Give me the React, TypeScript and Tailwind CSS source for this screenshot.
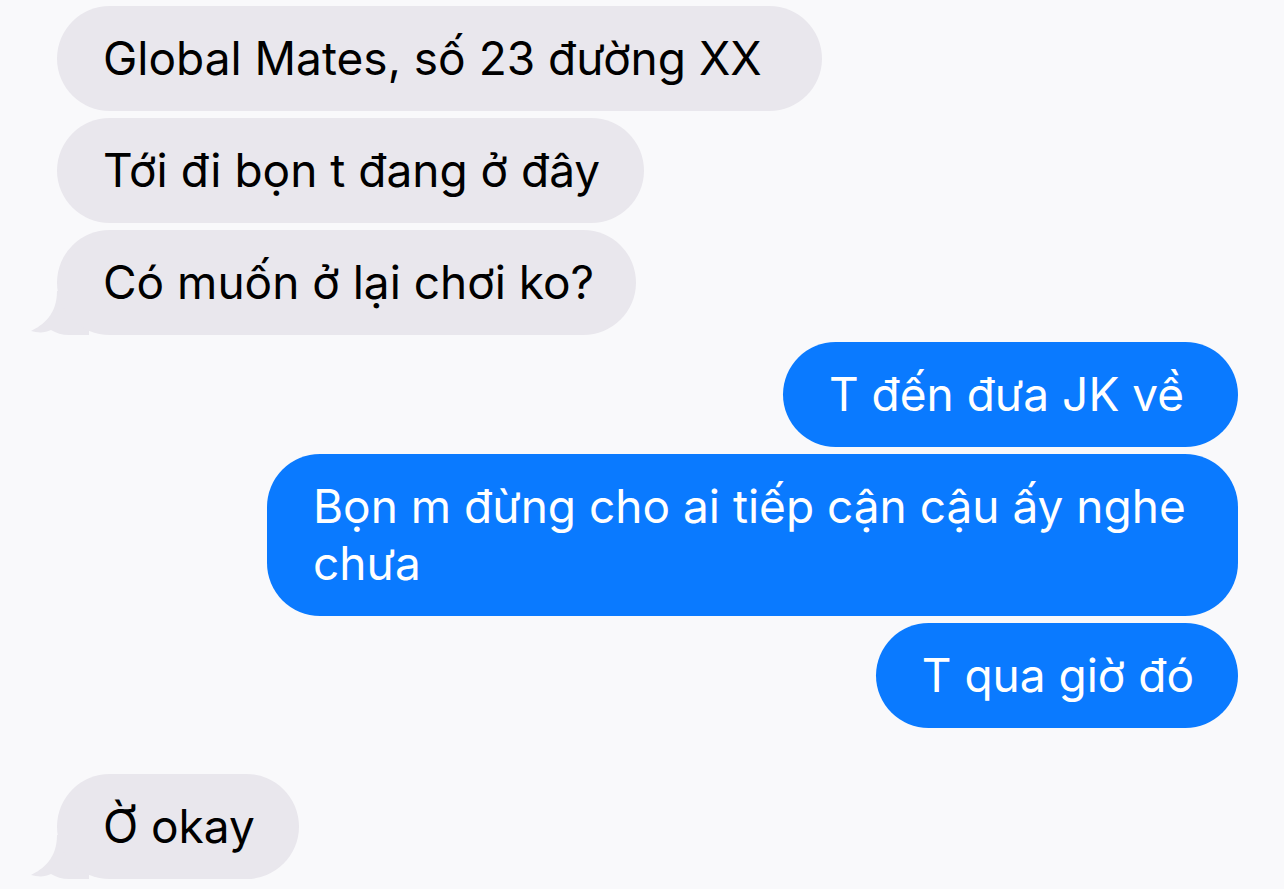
import React from "react";

const Tail = () => (
  <svg
    className="absolute"
    style={{ left: -28, bottom: 0 }}
    width="60"
    height="44"
    viewBox="0 0 60 44"
  >
    <path
      d="M28 0 L60 0 L60 44 L40 44 C33 44 27 42 22 39 C16 42 9 42 2 40 C14 34 28 24 28 0 Z"
      fill="#e9e7ed"
    />
  </svg>
);

const Gray = ({ text, tail, pr }: { text: string; tail?: boolean; pr: string }) => (
  <div className="flex justify-start pl-[57px]">
    <div className="relative">
      {tail && <Tail />}
      <div
        className={
          "relative rounded-[53px] bg-[#e9e7ed] pl-[46px] py-[24px] text-[46px] leading-[57px] text-black whitespace-nowrap " +
          pr
        }
      >
        {text}
      </div>
    </div>
  </div>
);

const Blue = ({ text, wrap, pr }: { text: string; wrap?: boolean; pr?: string }) => (
  <div className="flex justify-end pr-[46px]">
    <div
      className={
        wrap
          ? "w-[971px] rounded-[53px] bg-[#0a7aff] pl-[46px] pr-[46px] py-[24px] text-[46px] leading-[57px] text-white"
          : "rounded-[53px] bg-[#0a7aff] pl-[46px] py-[24px] text-[46px] leading-[57px] text-white whitespace-nowrap " +
            pr
      }
    >
      {text}
    </div>
  </div>
);

export default function App() {
  return (
    <div
      className="w-[1284px] h-[889px] overflow-hidden bg-[#f9f9fb] pt-[6px]"
      style={{ fontFamily: "Inter, 'Noto Sans', sans-serif" }}
    >
      <div className="flex flex-col gap-[7px]">
        <Gray text="Global Mates, số 23 đường XX" pr="pr-[60px]" />
        <Gray text="Tới đi bọn t đang ở đây" pr="pr-[44px]" />
        <Gray text="Có muốn ở lại chơi ko?" tail pr="pr-[42px]" />
        <Blue text="T đến đưa JK về" pr="pr-[54px]" />
        <Blue text="Bọn m đừng cho ai tiếp cận cậu ấy nghe chưa" wrap />
        <Blue text="T qua giờ đó" pr="pr-[44px]" />
      </div>
      <div className="mt-[46px]">
        <Gray text="Ờ okay" tail pr="pr-[44px]" />
      </div>
    </div>
  );
}
